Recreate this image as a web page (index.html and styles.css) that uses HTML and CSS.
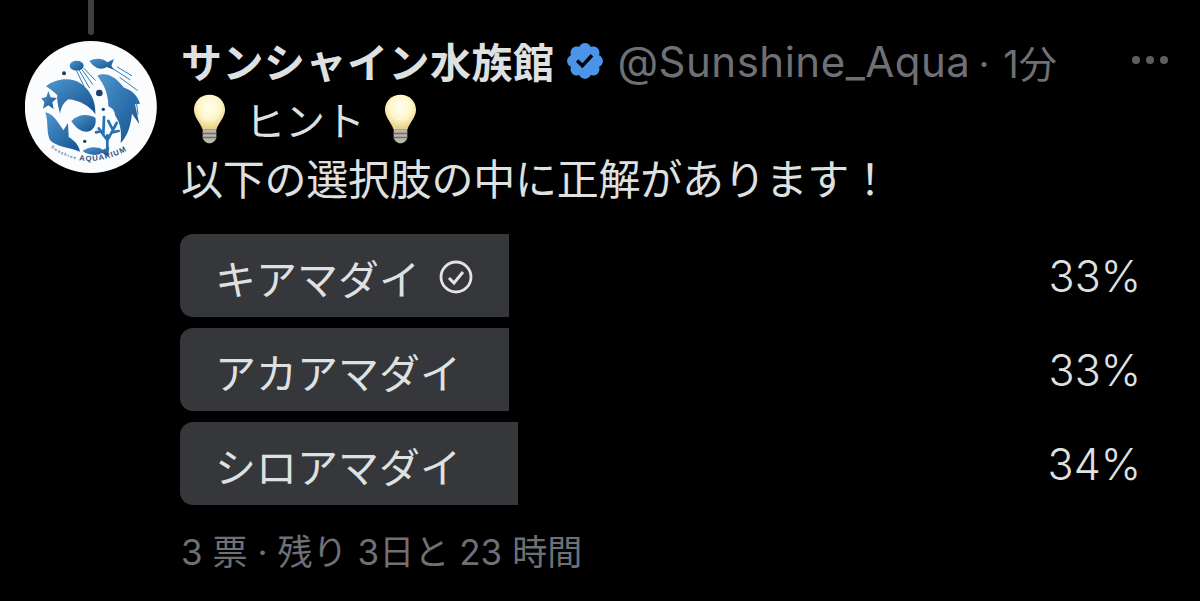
FILE: index.html
```html
<!DOCTYPE html>
<html lang="ja">
<head>
<meta charset="utf-8">
<title>サンシャイン水族館</title>
<link rel="stylesheet" href="styles.css">
</head>
<body>
<main class="tweet">
  <aside class="side">
    <div class="thread"></div>
    <svg class="avatar" viewBox="75 122 396 396" aria-label="Sunshine Aquarium">
      <defs>
        <linearGradient id="blue" x1="0" y1="0" x2="1" y2="1">
          <stop offset="0" stop-color="#4f97cf"/>
          <stop offset="1" stop-color="#12508f"/>
        </linearGradient>
        <path id="arc" d="M150 440 Q262 524 400 440"/>
      </defs>
      <circle cx="272.500" cy="320" r="198" fill="#fbfcfd"/>
      <g fill="url(#blue)">
        <ellipse cx="230" cy="196" rx="21" ry="15"/>
        <path d="M268 182 C285 172 310 172 322 186 L342 176 L334 196 L342 208 L320 200 C305 210 285 206 268 182Z"/>
        <path d="M138 258 C170 232 215 232 240 248 C270 268 288 300 286 342 C270 318 240 300 205 297 C192 306 184 318 180 340 C175 320 170 300 172 285 C160 272 150 266 138 258Z"/>
        <path d="M145 272 L152 291 L171 293 L157 306 L161 326 L145 315 L129 325 L133 306 L124 294 L139 290Z"/>
        <path d="M292 226 C320 212 350 232 372 262 C395 268 412 285 420 310 L405 312 L418 372 L396 340 C392 380 380 410 362 428 C365 395 362 370 345 345 C345 328 332 322 325 318 C325 285 315 255 292 226Z"/>
        <path d="M214 362 C235 340 265 340 286 352 C290 368 283 385 270 392 C250 400 228 385 214 362Z"/>
        <path d="M136 336 C158 340 172 362 190 390 L204 368 L206 410 C222 420 236 432 240 454 C210 442 170 440 150 420 C138 395 146 365 136 336Z"/>
        <path d="M248 452 C262 440 290 436 308 448 L328 440 L324 468 L306 458 C290 468 262 464 248 452Z"/>
      </g>
      <g fill="none" stroke="#2f7dbd" stroke-linecap="round">
        <path d="M238 210 L268 262 M246 208 L278 252 M230 212 L254 262 M252 204 L286 240" stroke-width="3"/>
        <path d="M340 206 L390 238 M352 200 L395 226 M360 232 L412 270 M408 296 L414 342" stroke-width="3"/>
        <path d="M322 450 L322 405 M322 420 L296 384 M322 420 L350 368 M310 404 L312 350 M336 396 L356 392 M305 392 L288 396 M338 388 L325 362" stroke-width="8" stroke="#2571b2"/>
      </g>
      <g fill="#193f70">
        <circle cx="298" cy="278" r="10"/>
        <circle cx="310" cy="327" r="5"/>
        <circle cx="192" cy="219" r="6"/>
        <circle cx="254" cy="423" r="5"/>
      </g>
      <text class="logo-text"><textPath href="#arc" startOffset="1%"><tspan class="logo-small">Sunshine </tspan>AQUARIUM</textPath></text>
    </svg>
  </aside>
  <section class="content">
    <header class="head">
      <span class="name">サンシャイン水族館</span>
      <svg class="badge" viewBox="0 0 24 24"><path fill="#4a94ea" fill-rule="evenodd" d="M22.25 12c0-1.43-.88-2.67-2.19-3.34.46-1.39.2-2.9-.81-3.91s-2.52-1.27-3.91-.81c-.66-1.31-1.91-2.19-3.34-2.19s-2.67.88-3.33 2.19c-1.4-.46-2.91-.2-3.92.81s-1.26 2.52-.8 3.91c-1.31.67-2.2 1.91-2.2 3.34s.89 2.67 2.2 3.34c-.46 1.39-.21 2.9.8 3.91s2.52 1.26 3.91.81c.67 1.31 1.91 2.19 3.34 2.19s2.68-.88 3.34-2.19c1.39.45 2.9.2 3.91-.81s1.27-2.52.81-3.91c1.31-.67 2.19-1.91 2.19-3.34zm-11.71 4.2L6.8 12.46l1.41-1.42 2.26 2.26 4.8-5.23 1.47 1.36-6.2 6.77z"/></svg>
      <span class="handle">@Sunshine_Aqua</span>
      <span class="time">·<span class="time-value">1分</span></span>
      <span class="more"><i></i><i></i><i></i></span>
    </header>
    <p class="line hint">
      <svg class="bulb" viewBox="0 0 34 52"><use href="#bulb-shape"/><defs><g id="bulb-shape"><radialGradient id="glow" cx=".5" cy=".35" r=".6"><stop offset="0" stop-color="#fffef2"/><stop offset=".6" stop-color="#fdf6c8"/><stop offset="1" stop-color="#e9d389"/></radialGradient><path fill="url(#glow)" d="M17 1C7.500 1 1 8 1 16.500 1 24 7 29 10 37H24C27 29 33 24 33 16.500 33 8 26.500 1 17 1Z"/><path fill="#b9b6ad" d="M10 37H24V45C24 47 21 51 17 51S10 47 10 45Z"/><path stroke="#6f6e6a" stroke-width="1.500" d="M10 41H24M10 45H24"/></g></defs></svg>
      <span class="hint-text">ヒント</span>
      <svg class="bulb" viewBox="0 0 34 52"><use href="#bulb-shape"/></svg>
    </p>
    <p class="line body-text">以下の選択肢の中に正解があります！</p>
    <ul class="poll">
      <li class="option">
        <div class="bar" style="width:329px">キアマダイ
          <svg class="check" viewBox="0 0 34 34"><circle cx="17" cy="17" r="15" fill="none" stroke="#e4e4e4" stroke-width="2.800"/><path d="M10 18l5 5 9-11" fill="none" stroke="#e4e4e4" stroke-width="3"/></svg>
        </div>
        <span class="pct">33%</span>
      </li>
      <li class="option">
        <div class="bar" style="width:329px">アカアマダイ</div>
        <span class="pct">33%</span>
      </li>
      <li class="option">
        <div class="bar" style="width:338px">シロアマダイ</div>
        <span class="pct">34%</span>
      </li>
    </ul>
    <footer class="meta">3 票 · 残り 3日と 23 時間</footer>
  </section>
</main>
</body>
</html>
```
FILE: styles.css
```css
* { box-sizing: border-box; }
html, body { margin: 0; height: 601px; overflow: hidden; background: #000; }
body {
  font-family: "Noto Sans CJK JP", "Liberation Sans", sans-serif;
  color: #dfe0e1;
}
.tweet { display: flex; padding-left: 25px; }
.side { display: flex; flex-direction: column; align-items: center; gap: 6px; width: 132px; flex: none; }
.thread { width: 6px; height: 35px; background: #3d3e42; border-radius: 0 0 3px 3px; }
.avatar { width: 132px; height: 132px; display: block; }
.logo-text { font: 700 23px "Liberation Sans", sans-serif; letter-spacing: 3px; fill: #2c4f7c; }
.logo-small { font-size: 13px; letter-spacing: 3.500px; fill: #5b7390; }
.content { flex: 1; margin-left: 24px; padding: 30px 32px 0 0; min-width: 0; }
.head { display: flex; align-items: center; height: 60px; white-space: nowrap; }
.name { font-size: 41px; font-weight: 700; letter-spacing: .5px; line-height: 60px; }
.badge { width: 42px; height: 42px; margin: 2px 0 0 9px; flex: none; }
.handle { font-family: "Inter", "Noto Sans CJK JP", sans-serif; font-size: 42px; letter-spacing: .5px; color: #6f7075; margin: 3px 0 0 12px; }
.time { font-family: "Inter", "Noto Sans CJK JP", sans-serif; font-size: 38px; color: #6f7075; margin: 3px 0 0 8px; }
.time-value { margin-left: 14px; }
.more { display: flex; gap: 6px; margin-left: auto; }
.more i { display: block; width: 8px; height: 8px; border-radius: 50%; background: #5c5d61; }
.line { margin: 0; font-size: 42px; line-height: 58px; white-space: nowrap; }
.body-text { letter-spacing: -.25px; }
.hint { display: flex; align-items: center; gap: 19px; padding-left: 12px; }
.hint-text { font-size: 40px; }
.bulb { width: 33px; height: 52px; flex: none; }
.poll { list-style: none; margin: 28px 0 0 -1px; padding: 0 27px 0 0; display: flex; flex-direction: column; gap: 11px; }
.option { display: flex; align-items: center; justify-content: space-between; height: 83px; }
.bar {
  display: flex; align-items: center; gap: 19px; height: 100%;
  padding: 2px 0 0 35px; background: #36373b; border-radius: 13px 0 0 13px;
  font-size: 41px; white-space: nowrap;
}
.check { width: 34px; height: 34px; flex: none; }
.pct { font-family: "Inter", sans-serif; font-size: 43px; font-weight: 300; }
.meta { margin-top: 24px; font-family: "Inter", "Noto Sans CJK JP", sans-serif; font-size: 35px; letter-spacing: .05px; line-height: 46px; color: #6f7075; }
```
